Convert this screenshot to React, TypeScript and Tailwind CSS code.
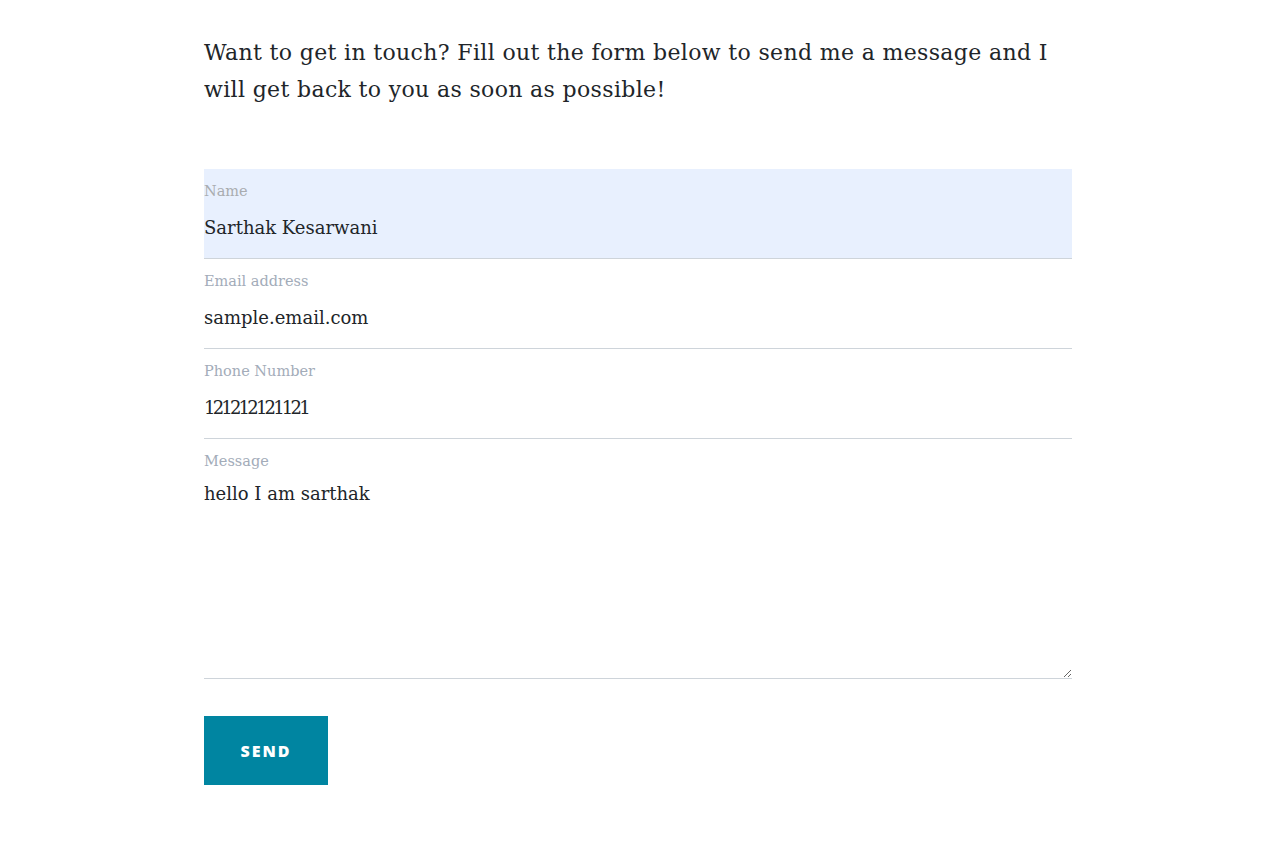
const fields = [
  { label: "Name", value: "Sarthak Kesarwani", filled: true },
  { label: "Email address", value: "sample.email.com", filled: false },
  { label: "Phone Number", value: "121212121121", filled: false, tight: true },
];

export default function App() {
  return (
    <main className="min-h-screen bg-white font-['DejaVu_Serif',serif] text-[#212529]">
      <div className="mx-auto w-[868px] pt-[34px]">
        <p className="text-[22px] leading-[37px] tracking-[0.35px]">
          Want to get in touch? Fill out the form below to send me a message and I will get
          back to you as soon as possible!
        </p>

        <form className="mt-[61px]">
          {fields.map((f) => (
            <div
              key={f.label}
              className={`flex flex-col border-b border-[#ced4da] pt-[13px] pb-[15px] ${
                f.filled ? "bg-[#e8f0fe]" : ""
              }`}
            >
              <label
                className={`text-[14.5px] leading-[18px] ${
                  f.filled ? "text-[#a9acb0]" : "text-[#a3acb9]"
                }`}
              >
                {f.label}
              </label>
              <input
                readOnly
                defaultValue={f.value}
                className={`mt-[13px] h-[30px] bg-transparent text-[18px] leading-[30px] text-[#212529] outline-none ${
                  f.tight ? "tracking-[-2.8px]" : ""
                }`}
              />
            </div>
          ))}

          {/* Message */}
          <div className="flex flex-col border-b border-[#ced4da] pt-[13px]">
            <label className="text-[14.5px] leading-[18px] text-[#a3acb9]">Message</label>
            <textarea
              readOnly
              defaultValue="hello I am sarthak"
              className="mt-[9px] h-[199px] bg-transparent text-[18px] leading-[30px] text-[#212529] outline-none"
            />
          </div>

          <button
            type="button"
            className="mt-[37px] flex h-[69px] w-[124px] items-center justify-center bg-[#0085a1] font-['Open_Sans',sans-serif] text-[16px] font-extrabold tracking-[2px] text-white"
          >
            SEND
          </button>
        </form>
      </div>
    </main>
  );
}
